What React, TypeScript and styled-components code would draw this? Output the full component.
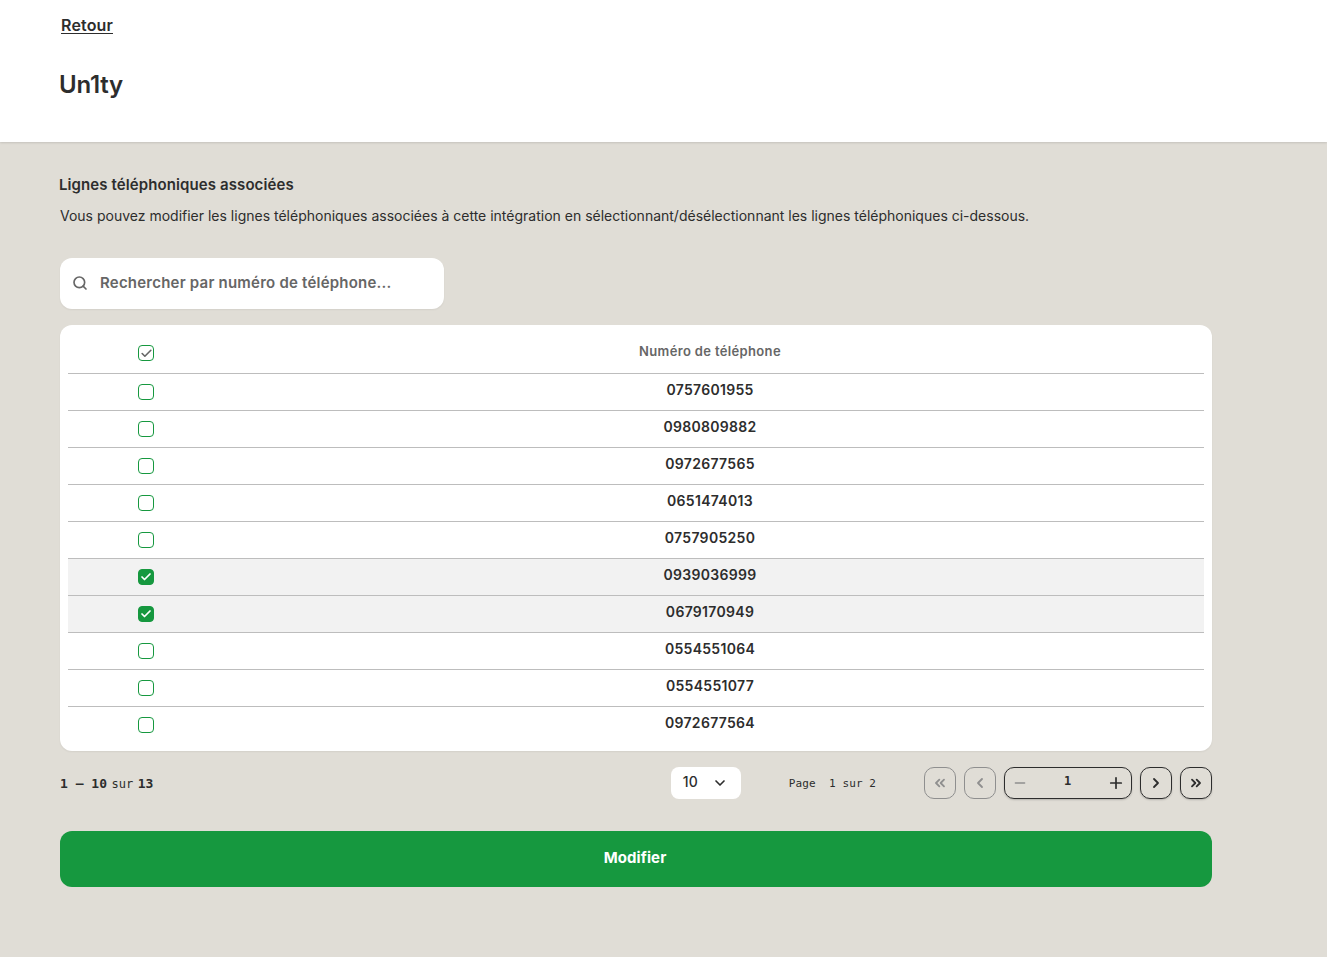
import React from "react";
import styled, { createGlobalStyle } from "styled-components";
import { Check, ChevronDown, ChevronLeft, ChevronRight, ChevronsLeft, ChevronsRight, Minus, Plus, Search } from "lucide-react";

const Global = createGlobalStyle`
  html, body { margin: 0; padding: 0; background: #e0ddd6; }
  body { font-family: Inter, "Liberation Sans", sans-serif; color: #2d2d2d; }
  * { box-sizing: border-box; }
`;

const Page = styled.div`
  min-height: 957px;
  background: #e0ddd6;
  display: flex;
  flex-direction: column;
`;
const Header = styled.header`
  height: 142px;
  background: #fff;
  padding: 16px 60px 0;
  box-shadow: 0 1px 2px rgba(0, 0, 0, 0.12);
`;
const BackLink = styled.a`
  display: block;
  width: max-content;
  margin-left: 1px;
  font-size: 16px;
  font-weight: 600;
  line-height: 18px;
  letter-spacing: 0.15px;
  color: #2d2d2d;
  text-decoration: underline;
  text-underline-offset: 2px;
`;
const Title = styled.h1`
  margin: 35px 0 0 -1px;
  font-size: 24px;
  font-weight: 600;
  line-height: 32px;
  letter-spacing: -0.2px;
  color: #2d2d2d;
`;
const Main = styled.main`
  width: 1212px;
  padding: 33px 0 0 60px;
  display: flex;
  flex-direction: column;
`;
const SectionTitle = styled.h2`
  margin: 0 0 0 -1px;
  font-size: 15px;
  font-weight: 600;
  line-height: 20px;
  letter-spacing: 0.1px;
`;
const Description = styled.p`
  margin: 11px 0 0;
  font-size: 14px;
  line-height: 20px;
  color: #2d2d2d;
`;
const SearchBox = styled.div`
  margin-top: 32px;
  width: 384px;
  height: 51px;
  background: #fff;
  border-radius: 12px;
  display: flex;
  align-items: center;
  gap: 12px;
  padding: 0 12px;
  box-shadow: 0 1px 2px rgba(0, 0, 0, 0.06);
  color: #666;
`;
const SearchIcon = styled(Search)`
  margin-top: -1px;
`;
const SearchText = styled.span`
  font-size: 15px;
  font-weight: 600;
  letter-spacing: 0.22px;
  color: #666;
  margin-top: -2px;
`;
const Card = styled.section`
  margin-top: 16px;
  background: #fff;
  border-radius: 12px;
  padding: 0 8px 8px;
  box-shadow: 0 1px 2px rgba(0, 0, 0, 0.06);
`;
const Row = styled.div<{ $head?: boolean; $selected?: boolean; $last?: boolean }>`
  display: grid;
  grid-template-columns: 148px 1fr;
  align-items: center;
  height: ${(p) => (p.$head ? "49px" : p.$last ? "36px" : "37px")};
  padding-top: ${(p) => (p.$head ? "8px" : "0")};
  background: ${(p) => (p.$selected ? "#f2f2f2" : "transparent")};
  border-bottom: ${(p) => (p.$last ? "none" : "1px solid #bdbdbd")};
`;
const BoxCell = styled.div`
  display: flex;
  justify-content: center;
  padding-left: 8px;
`;
const Box = styled.span<{ $checked?: boolean }>`
  width: 16px;
  height: 16px;
  border-radius: 4px;
  border: 1px solid #16983f;
  background: ${(p) => (p.$checked ? "#16983f" : "#fff")};
  color: #fff;
  display: flex;
  align-items: center;
  justify-content: center;
`;
const HeadCell = styled.div`
  text-align: center;
  font-size: 13px;
  font-weight: 600;
  letter-spacing: 0.35px;
  color: #666;
  margin-top: -4px;
`;
const NumberCell = styled.div`
  text-align: center;
  font-size: 14px;
  font-weight: 600;
  letter-spacing: 0.3px;
  color: #2d2d2d;
  margin-top: -6px;
`;
const Pager = styled.div`
  margin-top: 16px;
  height: 32px;
  display: flex;
  align-items: center;
  gap: 48px;
`;
const Summary = styled.div`
  margin-right: auto;
  display: flex;
  align-items: baseline;
  gap: 4.5px;
  font-family: "DejaVu Sans Mono", monospace;
  font-size: 13px;
  font-weight: 700;
  color: #2d2d2d;
`;
const Light = styled.span`
  font-weight: 400;
  font-size: 12px;
`;
const SizeSelect = styled.div`
  width: 70px;
  height: 32px;
  background: #fff;
  border-radius: 8px;
  display: flex;
  align-items: center;
  justify-content: space-between;
  padding: 0 13px 0 12px;
  font-size: 14px;
  font-weight: 500;
  color: #2d2d2d;
`;
const SizeValue = styled.span`
  margin-top: -3px;
`;
const PageLabel = styled.div`
  font-family: "DejaVu Sans Mono", monospace;
  font-size: 11px;
  letter-spacing: 0.08px;
  color: #2d2d2d;
  white-space: pre;
`;
const Controls = styled.div`
  display: flex;
  gap: 8px;
`;
const IconButton = styled.button<{ $disabled?: boolean }>`
  width: 32px;
  height: 32px;
  padding: 0;
  background: transparent;
  border: 1px solid ${(p) => (p.$disabled ? "#8f8f8f" : "#2d2d2d")};
  color: ${(p) => (p.$disabled ? "#8f8f8f" : "#2d2d2d")};
  border-radius: 10px;
  display: flex;
  align-items: center;
  justify-content: center;
  box-shadow: ${(p) => (p.$disabled ? "none" : "0 1px 2px rgba(0,0,0,0.2)")};
`;
const Stepper = styled.div`
  width: 128px;
  height: 32px;
  border: 1px solid #2d2d2d;
  border-radius: 10px;
  display: flex;
  align-items: center;
  justify-content: space-between;
  padding: 0 6px 0 7px;
  box-shadow: 0 1px 2px rgba(0, 0, 0, 0.2);
  color: #2d2d2d;
`;
const StepValue = styled.span`
  font-family: "DejaVu Sans Mono", monospace;
  font-size: 12px;
  font-weight: 700;
  margin-top: -4px;
`;
const MinusIcon = styled(Minus)`
  color: #8f8f8f;
`;
const Submit = styled.button`
  margin-top: 32px;
  height: 56px;
  border: none;
  border-radius: 12px;
  background: #16983f;
  color: #fff;
  font-family: inherit;
  font-size: 15px;
  font-weight: 700;
  letter-spacing: 0.1px;
  padding: 0 2px 3px 0;
  text-align: center;
`;

const numbers: [string, boolean][] = [
  ["0757601955", false],
  ["0980809882", false],
  ["0972677565", false],
  ["0651474013", false],
  ["0757905250", false],
  ["0939036999", true],
  ["0679170949", true],
  ["0554551064", false],
  ["0554551077", false],
  ["0972677564", false],
];

export default function App() {
  return (
    <Page>
      <Global />
      <Header>
        <BackLink>Retour</BackLink>
        <Title>Un1ty</Title>
      </Header>
      <Main>
        <SectionTitle>Lignes téléphoniques associées</SectionTitle>
        <Description>
          Vous pouvez modifier les lignes téléphoniques associées à cette intégration en sélectionnant/désélectionnant les lignes téléphoniques ci-dessous.
        </Description>
        <SearchBox>
          <SearchIcon size={16} strokeWidth={2.5} />
          <SearchText>Rechercher par numéro de téléphone...</SearchText>
        </SearchBox>
        <Card>
          <Row $head>
            <BoxCell>
              <Box>
                <Check size={13} strokeWidth={3} color="#666" />
              </Box>
            </BoxCell>
            <HeadCell>Numéro de téléphone</HeadCell>
          </Row>
          {numbers.map(([n, sel], i) => (
            <Row key={n} $selected={sel} $last={i === numbers.length - 1}>
              <BoxCell>
                <Box $checked={sel}>{sel && <Check size={12} strokeWidth={3.5} />}</Box>
              </BoxCell>
              <NumberCell>{n}</NumberCell>
            </Row>
          ))}
        </Card>
        <Pager>
          <Summary>
            <span>1 – 10</span>
            <Light>sur</Light>
            <span>13</span>
          </Summary>
          <SizeSelect>
            <SizeValue>10</SizeValue>
            <ChevronDown size={16} strokeWidth={2.5} />
          </SizeSelect>
          <PageLabel>{"Page  1 sur 2"}</PageLabel>
          <Controls>
            <IconButton $disabled>
              <ChevronsLeft size={16} strokeWidth={2.75} />
            </IconButton>
            <IconButton $disabled>
              <ChevronLeft size={16} strokeWidth={2.75} />
            </IconButton>
            <Stepper>
              <MinusIcon size={16} strokeWidth={2} />
              <StepValue>1</StepValue>
              <Plus size={18} strokeWidth={2.25} />
            </Stepper>
            <IconButton>
              <ChevronRight size={16} strokeWidth={2.75} />
            </IconButton>
            <IconButton>
              <ChevronsRight size={16} strokeWidth={2.75} />
            </IconButton>
          </Controls>
        </Pager>
        <Submit>Modifier</Submit>
      </Main>
    </Page>
  );
}
